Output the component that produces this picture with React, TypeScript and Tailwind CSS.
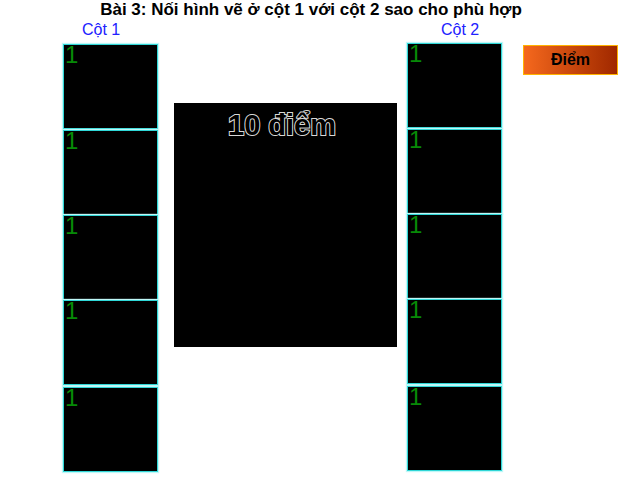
import React from "react";

const Box = ({ extra = "" }: { extra?: string }) => (
  <div
    className={`relative h-[85px] w-full bg-black border border-[#2fd6d6] shadow-[0_0_1px_1px_#bff7f7] ${extra}`}
  >
    <span className="absolute left-[1px] top-[-1px] text-[24px] leading-[22px] text-[#078a07] [font-family:'Liberation_Sans',Arial,sans-serif]">
      1
    </span>
  </div>
);

export default function App() {
  return (
    <div className="w-[640px] h-[480px] bg-white overflow-hidden [font-family:'Liberation_Sans',Arial,sans-serif]">
      <div className="w-[622px] h-[21px] text-center text-[17px] leading-[19px] font-bold text-black">
        Bài 3: Nối hình vẽ ở cột 1 với cột 2 sao cho phù hợp
      </div>
      <div className="flex items-start">
        <div className="ml-[63px] w-[95px] flex flex-col">
          <div className="h-[23px] pl-[19px] text-[16px] leading-[18px] text-[#2121ff]">Cột 1</div>
          <div className="flex flex-col">
            <Box />
            <Box extra="mt-px" />
            <Box />
            <Box />
            <Box extra="mt-[2px]" />
          </div>
        </div>
        <div className="ml-[16px] mt-[82px] w-[223px] h-[244px] bg-black flex justify-center pr-[7px] pt-[8px]">
          <span className="text-[29px] leading-[28px] font-bold text-black [-webkit-text-stroke:2px_#d8d8d8] [paint-order:stroke_fill]">
            10 điểm
          </span>
        </div>
        <div className="ml-[10px] w-[95px] flex flex-col">
          <div className="h-[22px] pl-[34px] text-[16px] leading-[18px] text-[#2121ff]">Cột 2</div>
          <div className="flex flex-col">
            <Box />
            <Box extra="mt-px" />
            <Box />
            <Box />
            <Box extra="mt-[2px]" />
          </div>
        </div>
        <div className="ml-[21px] mt-[24px] w-[95px] h-[30px] border border-[#ffb300] bg-gradient-to-r from-[#f5681d] to-[#a02800] flex items-center justify-center text-[16px] font-bold text-black">
          Điểm
        </div>
      </div>
    </div>
  );
}
